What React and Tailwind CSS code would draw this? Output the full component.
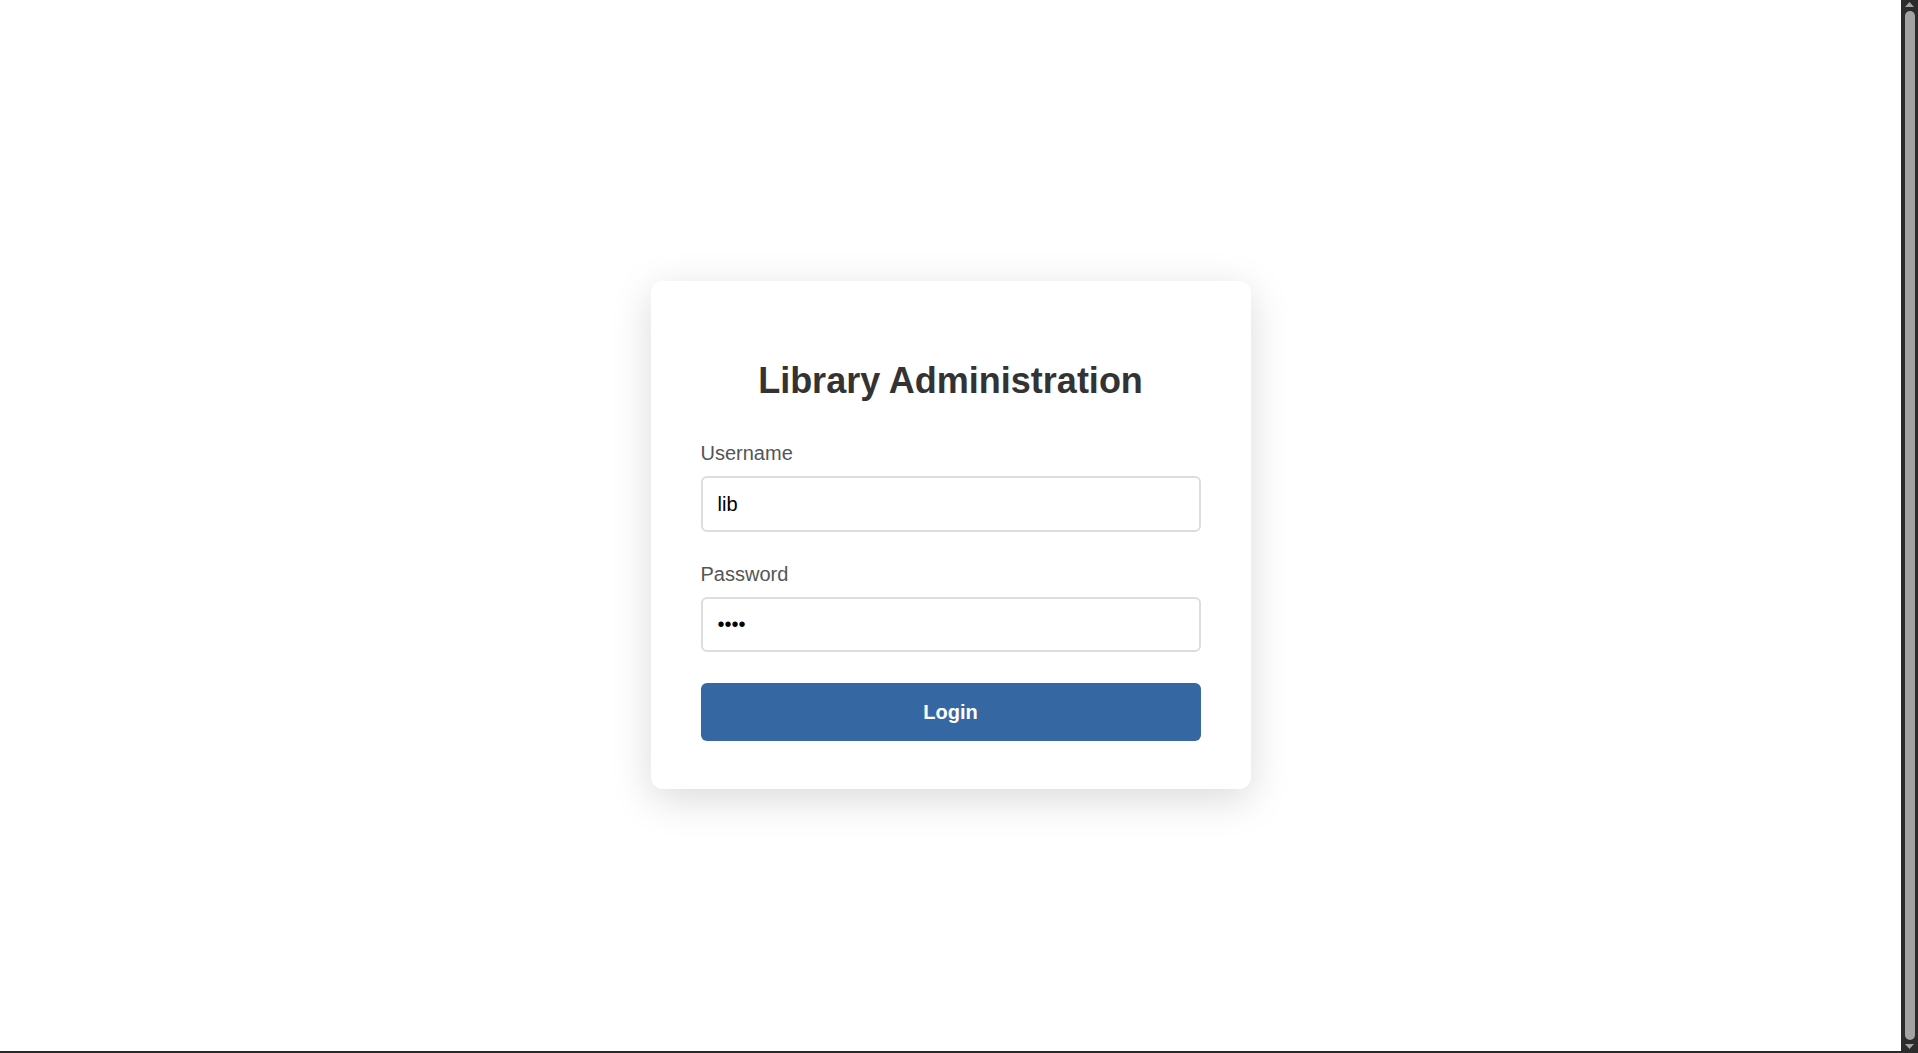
import React from "react";

function FakeScrollbar() {
  return (
    <div className="w-[17px] h-full bg-[#2b2b2b] flex flex-col items-center shrink-0">
      <svg width="17" height="10" viewBox="0 0 17 10" className="shrink-0">
        <polygon points="8.5,2 13,7 4,7" fill="#a3a3a3" />
      </svg>
      <div className="flex-1 w-[10px] rounded-[5px] bg-[#a3a3a3] my-[1px]" />
      <svg width="17" height="10" viewBox="0 0 17 10" className="shrink-0">
        <polygon points="4,3 13,3 8.5,8" fill="#a3a3a3" />
      </svg>
    </div>
  );
}

export default function App() {
  return (
    <div
      className="h-screen flex flex-col bg-white overflow-hidden"
      style={{ fontFamily: '"Liberation Sans", Arial, sans-serif' }}
    >
      <div className="flex-1 flex min-h-0">
        <div className="flex-1 flex items-center justify-center pt-[19px]">
          <div className="w-[600px] rounded-[12px] bg-white shadow-[0_10px_40px_rgba(0,0,0,0.15)] px-[50px] pt-[79px] pb-[48px] flex flex-col">
            <h1 className="text-[36px] leading-[41px] font-bold text-[#333333] text-center mb-[41px]">
              Library Administration
            </h1>
            <div className="flex flex-col">
              <label className="text-[20px] leading-[23px] text-[#555555] mb-[11px]">Username</label>
              <input
                type="text"
                defaultValue="lib"
                className="h-[56px] w-full border-2 border-[#dddddd] rounded-[6px] px-[15px] text-[20px] text-black outline-none bg-white"
              />
            </div>
            <div className="flex flex-col mt-[31px]">
              <label className="text-[20px] leading-[23px] text-[#555555] mb-[11px]">Password</label>
              <input
                type="password"
                defaultValue="1234"
                className="h-[55px] w-full border-2 border-[#dddddd] rounded-[6px] px-[15px] text-[20px] text-black outline-none bg-white"
              />
            </div>
            <button className="mt-[31px] h-[58px] w-full rounded-[6px] bg-[#3568a3] text-white text-[20px] font-bold">
              Login
            </button>
          </div>
        </div>
        <FakeScrollbar />
      </div>
      <div className="h-[2px] bg-[#2b2b2b] shrink-0" />
    </div>
  );
}
